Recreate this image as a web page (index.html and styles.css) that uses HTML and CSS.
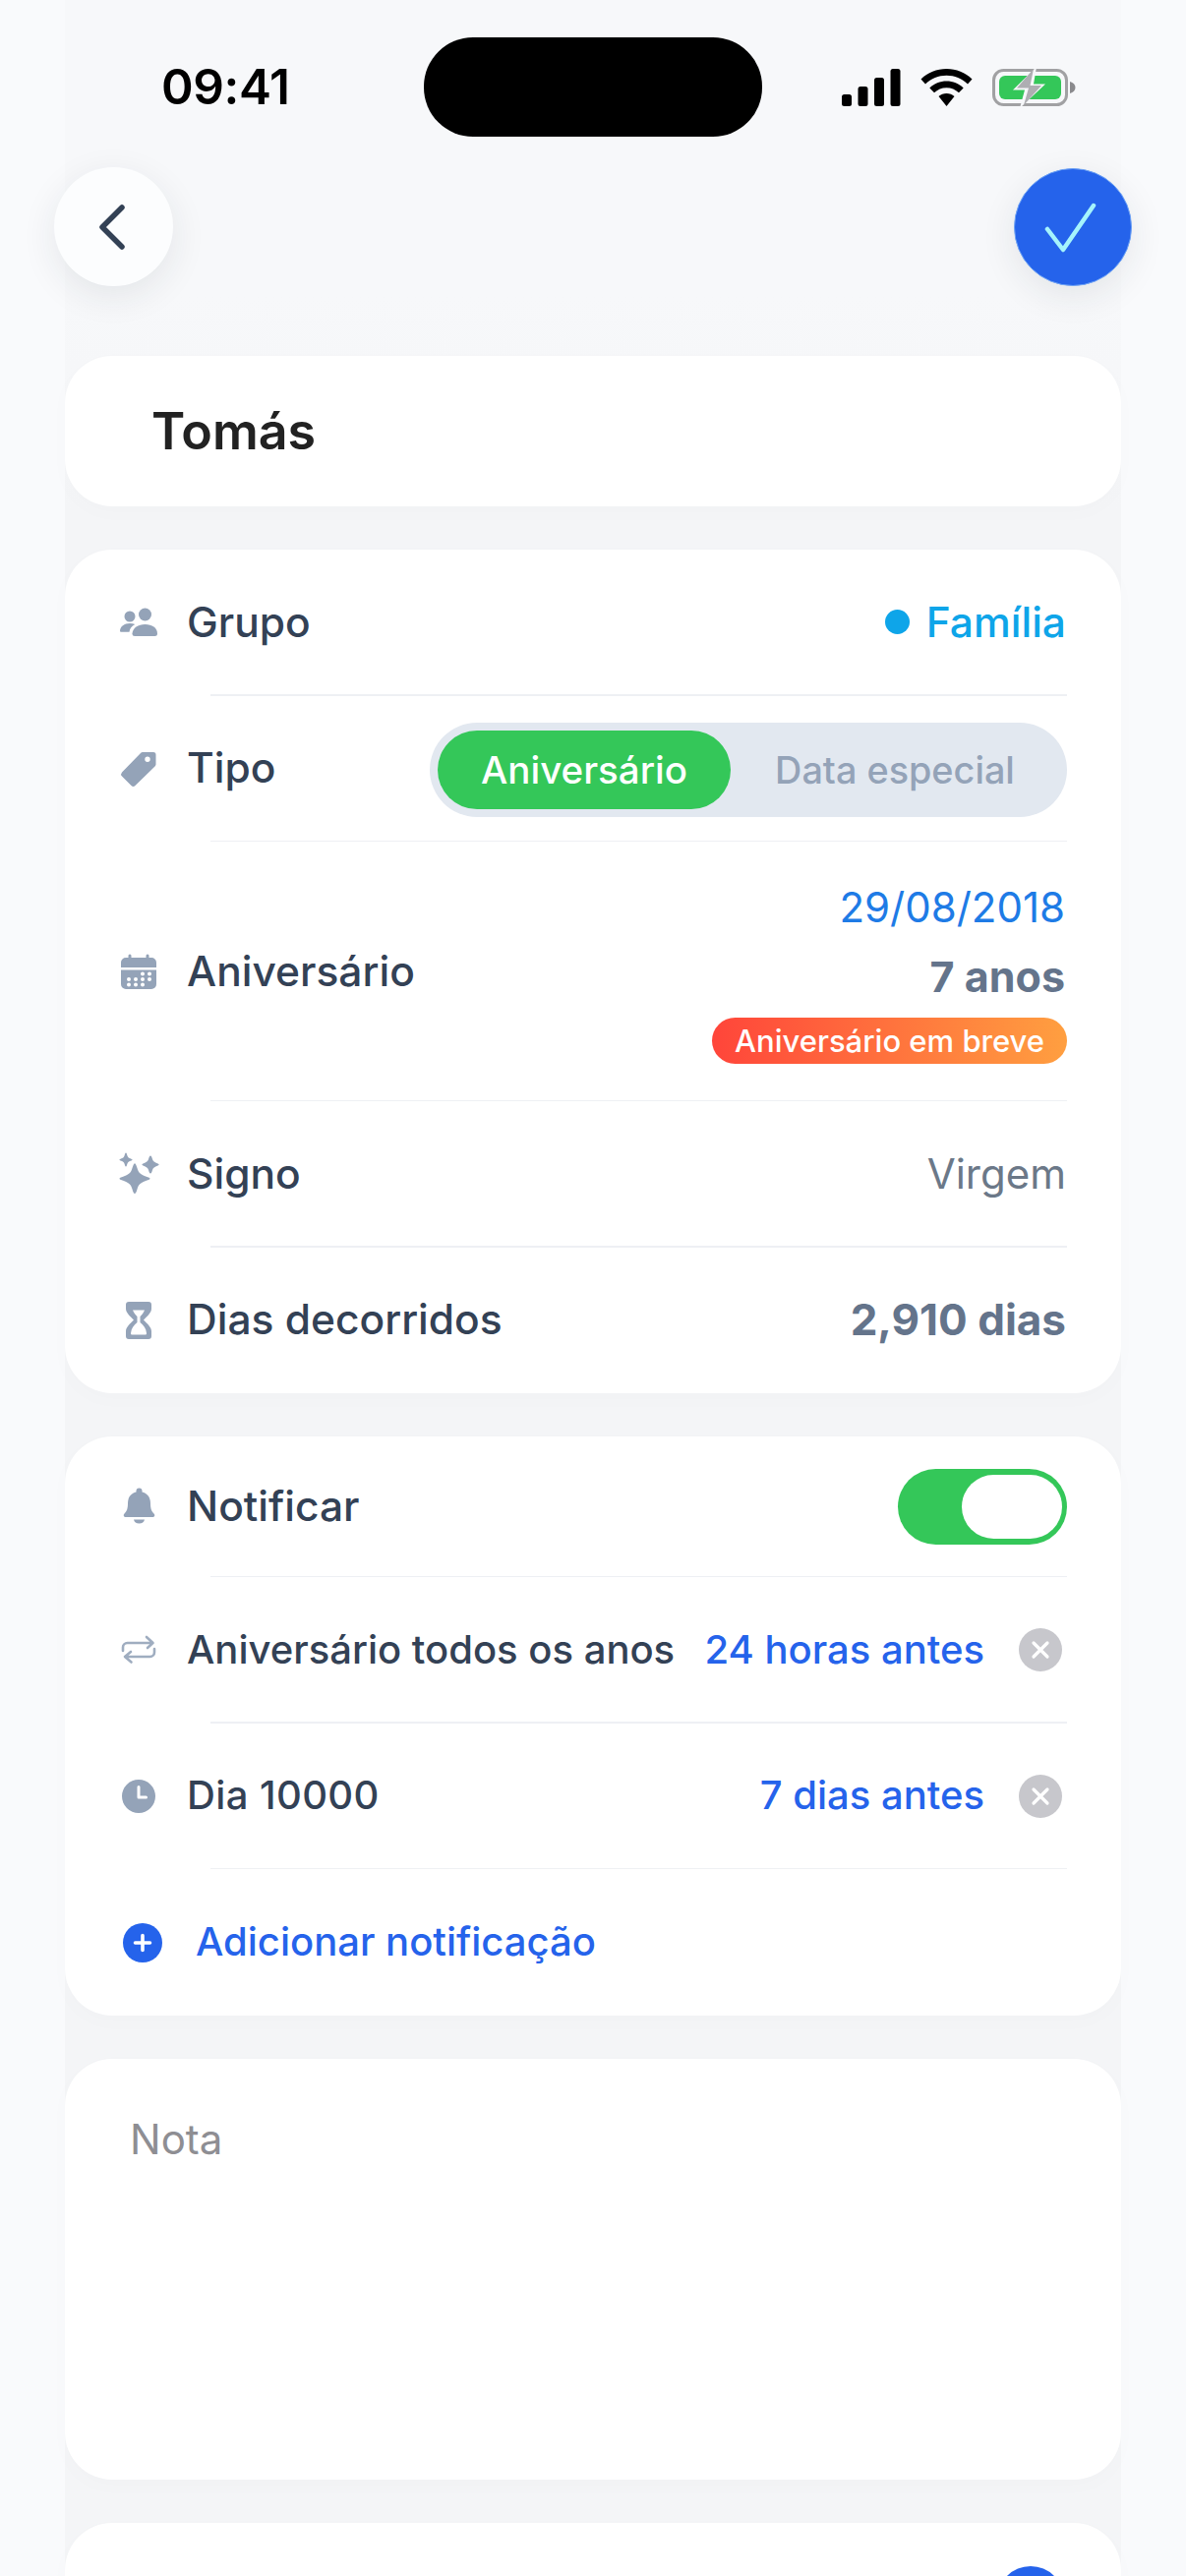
FILE: index.html
```html
<!DOCTYPE html>
<html lang="pt">
<head>
<meta charset="utf-8">
<title>Tomás</title>
<link rel="stylesheet" href="styles.css">
</head>
<body>
<div class="screen">
  <div class="column">
    <header class="top">
      <div class="status">
        <span class="time">09:41</span>
        <div class="island"></div>
        <div class="status-icons">
          <svg class="ic-signal" viewBox="0 0 60 38" width="60" height="38"><rect x="0" y="26" width="10" height="12" rx="2.5"/><rect x="16.5" y="18" width="10" height="20" rx="2.5"/><rect x="33" y="9" width="10" height="29" rx="2.5"/><rect x="49.5" y="0" width="10" height="38" rx="2.5"/></svg>
          <svg class="ic-wifi" viewBox="0 0 53 38" width="53" height="38"><path d="M26.5 0C16.5 0 7.5 3.8 0.5 10.5L5 15.5C10.8 10 18.3 6.8 26.5 6.8S42.2 10 48 15.5L52.5 10.5C45.5 3.8 36.5 0 26.5 0Z"/><path d="M26.5 12.5C20 12.5 14 15 9.3 19.4L14 24.3C17.4 21.2 21.7 19.3 26.5 19.3S35.6 21.2 39 24.3L43.7 19.4C39 15 33 12.5 26.5 12.5Z"/><path d="M26.5 25C23.5 25 20.7 26.1 18.5 28.1L26.5 38L34.5 28.1C32.3 26.1 29.5 25 26.5 25Z"/></svg>
          <svg class="ic-battery" viewBox="0 0 86 38" width="86" height="38"><rect x="1.5" y="1.5" width="74" height="35" rx="10" fill="none" stroke="#a1a1a3" stroke-width="3"/><path d="M79 13c3.500 1 5.500 3 5.500 6s-2 5-5.500 6z" fill="#8a8a8d"/><rect x="7" y="7" width="63" height="24" rx="6" fill="#34c759"/><path d="M45 -2L21 21.500H33L28 40L54 15.500H42Z" fill="#f7f8fa"/><path d="M42 0L25 19.500H37L32 37L50 17H38.500Z" fill="#aeaeb2"/></svg>
        </div>
      </div>
      <nav class="nav">
        <button class="round back" type="button" aria-label="Voltar">
          <svg viewBox="0 0 28 48" width="28" height="48"><path d="M24 4L4 24L24 44" fill="none" stroke="#334155" stroke-width="5.500" stroke-linecap="round" stroke-linejoin="round"/></svg>
        </button>
        <button class="round save" type="button" aria-label="Guardar">
          <svg viewBox="0 0 56 54" width="56" height="54"><path d="M4 29L20 50L51 5" fill="none" stroke="#a5f3fc" stroke-width="4.500" stroke-linecap="round" stroke-linejoin="round"/></svg>
        </button>
      </nav>
    </header>

    <main class="cards">
      <section class="card name-card"><h1 class="name">Tomás</h1></section>

      <section class="card">
        <div class="row">
          <svg class="icon" viewBox="0 0 40 40"><circle cx="11" cy="14" r="5.500"/><circle cx="26.500" cy="12" r="6.500"/><path d="M1 29c0-5 4.500-8 10-8 2 0 3.800.4 5.300 1.100C12.800 24 11 26.500 10.500 29.700H2.500C1.600 29.700 1 29.500 1 29Z"/><path d="M13.500 31.500C14 25.500 19.500 22 26.500 22S39 25.500 39 31.500C39 33.200 38 34 36.500 34H16C14.500 34 13.500 33.200 13.500 31.500Z"/></svg>
          <span class="label">Grupo</span>
          <span class="value family"><i class="dot"></i>Família</span>
        </div>
        <div class="row">
          <svg class="icon" viewBox="0 0 40 40"><path fill-rule="evenodd" d="M24 3H35A2.500 2.500 0 0 1 37.500 5.500V15.500A3 3 0 0 1 36.500 17.500L16.500 37A3 3 0 0 1 12.500 37L3 27.500A3 3 0 0 1 3 23.500L22 4A3 3 0 0 1 24 3ZM29 7.500A2.700 2.700 0 1 0 29 12.900A2.700 2.700 0 1 0 29 7.500Z"/></svg>
          <span class="label">Tipo</span>
          <div class="segment">
            <span class="seg-on">Aniversário</span>
            <span class="seg-off">Data especial</span>
          </div>
        </div>
        <div class="row row-tall">
          <svg class="icon" viewBox="0 0 40 40"><path d="M11 2.500a1.500 1.500 0 0 1 1.500 1.500v2h15V4a1.500 1.500 0 0 1 3 0v2H33a5 5 0 0 1 5 5v5H2v-5a5 5 0 0 1 5-5h2.500V4A1.500 1.500 0 0 1 11 2.500Z"/><path fill-rule="evenodd" d="M2 18.500h36V33a5 5 0 0 1-5 5H7a5 5 0 0 1-5-5ZM24 20.500a2 2 0 1 0 0 4a2 2 0 1 0 0-4ZM31 20.500a2 2 0 1 0 0 4a2 2 0 1 0 0-4ZM10 26a2 2 0 1 0 0 4a2 2 0 1 0 0-4ZM17 26a2 2 0 1 0 0 4a2 2 0 1 0 0-4ZM24 26a2 2 0 1 0 0 4a2 2 0 1 0 0-4ZM31 26a2 2 0 1 0 0 4a2 2 0 1 0 0-4ZM10 31.500a2 2 0 1 0 0 4a2 2 0 1 0 0-4ZM17 31.500a2 2 0 1 0 0 4a2 2 0 1 0 0-4ZM24 31.500a2 2 0 1 0 0 4a2 2 0 1 0 0-4Z"/></svg>
          <span class="label">Aniversário</span>
          <div class="date-stack">
            <span class="date">29/08/2018</span>
            <span class="years">7 anos</span>
            <span class="badge">Aniversário em breve</span>
          </div>
        </div>
        <div class="row">
          <svg class="icon" viewBox="0 0 40 40"><path d="M16 9C16.800 10 17.500 10.500 18.500 14C20 19 21.500 20.500 30 23.500C32 24.200 32 25.300 30 26C21.500 29 20 30.500 18.500 35.500C17.500 39 16.800 40 16 40S14.500 39 13.500 35.500C12 30.500 10.500 29 2 26C0 25.300 0 24.200 2 23.500C10.500 20.500 12 19 13.500 14C14.500 10.500 15.200 10 16 9Z"/><path d="M7 -1.500C7.800 -1.500 8 0 8.500 1.500C9 3 10 4 12.500 4.700C14 5.100 14 6 12.500 6.400C10 7.100 9 8 8.500 9.500C8 11 7.800 12.500 7 12.500S6 11 5.500 9.500C5 8 4 7.100 1.500 6.400C0 6 0 5.100 1.500 4.700C4 4 5 3 5.500 1.500C6 0 6.200 -1.500 7 -1.500Z"/><path d="M32 1.500C33 1.500 33.300 3 34 5C34.700 7 36 8.300 39.500 9.500C41 10 41 11 39.500 11.500C36 12.700 34.700 14 34 16C33.300 18 33 19.500 32 19.500S30.700 18 30 16C29.300 14 28 12.700 24.500 11.500C23 11 23 10 24.500 9.500C28 8.300 29.300 7 30 5C30.700 3 31 1.500 32 1.500Z"/></svg>
          <span class="label">Signo</span>
          <span class="value muted">Virgem</span>
        </div>
        <div class="row">
          <svg class="icon" viewBox="0 0 40 40"><path fill-rule="evenodd" d="M10 1H30A3 3 0 0 1 33 4V8C33 12 29 15.500 25 19.500C29 23.500 33 27 33 31V36A3 3 0 0 1 30 39H10A3 3 0 0 1 7 36V31C7 27 11 23.500 15 19.500C11 15.500 7 12 7 8V4A3 3 0 0 1 10 1ZM14 9.500C15 12 16.500 14 18.500 16V22C15 25 12.500 28 12 33C12 34 12.500 34.500 13.500 34.500H26.500C27.500 34.500 28 34 28 33C27.500 28 25 25 21.500 22V16C23.500 14 25 12 26 9.500Z"/></svg>
          <span class="label">Dias decorridos</span>
          <span class="value strong">2,910 dias</span>
        </div>
      </section>

      <section class="card">
        <div class="row row-first">
          <svg class="icon" viewBox="0 0 40 40"><path d="M20.500.5A3 3 0 0 1 23.500 3.500V4.500C29.500 6 32 10.500 32 16C32 21.500 33 24 35.500 26.500C37 28 36.200 30 34 30H7C4.800 30 4 28 5.500 26.500C8 24 9 21.500 9 16C9 10.500 11.500 6 17.500 4.500V3.500A3 3 0 0 1 20.500.5Z"/><path d="M15 32.500H26C25.500 35 23.500 36.500 20.500 36.500S15.500 35 15 32.500Z"/></svg>
          <span class="label">Notificar</span>
          <div class="toggle"><span class="knob"></span></div>
        </div>
        <div class="row">
          <svg class="icon icon-line" viewBox="0 0 40 40"><path d="M4 21V17.500A4.500 4.500 0 0 1 8.500 13H34.500M28 7L34.500 13L29 18" /><path d="M36 19V22.500A4.500 4.500 0 0 1 31.500 27H6.500M12 22L6 27L12.500 32.500"/></svg>
          <span class="label small grow">Aniversário todos os anos</span>
          <span class="link">24 horas antes</span>
          <span class="clear"><svg viewBox="0 0 44 44" width="44" height="44"><path d="M15 15L29 29M29 15L15 29" stroke="#fff" stroke-width="3.200" stroke-linecap="round"/></svg></span>
        </div>
        <div class="row">
          <svg class="icon" viewBox="0 0 40 40"><circle cx="20" cy="20" r="17"/><path d="M20 10.500V21H27.500" fill="none" stroke="#fff" stroke-width="3" stroke-linecap="round" stroke-linejoin="round"/></svg>
          <span class="label small spaced grow">Dia 10000</span>
          <span class="link">7 dias antes</span>
          <span class="clear"><svg viewBox="0 0 44 44" width="44" height="44"><path d="M15 15L29 29M29 15L15 29" stroke="#fff" stroke-width="3.200" stroke-linecap="round"/></svg></span>
        </div>
        <div class="row row-add">
          <span class="plus"><svg viewBox="0 0 40 40" width="40" height="40"><path d="M20 12.500V27.500M12.500 20H27.500" stroke="#fff" stroke-width="3.600" stroke-linecap="round"/></svg></span>
          <span class="link add">Adicionar notificação</span>
        </div>
      </section>

      <section class="card note-card"><span class="note">Nota</span></section>

      <section class="card last-card"><span class="last-dot"></span></section>
    </main>
  </div>
</div>
</body>
</html>
```

FILE: styles.css
```css
* { box-sizing: border-box; }
html, body { margin: 0; padding: 0; height: 2620px; overflow: hidden; }
body {
  width: 1206px;
  background: #f9fafc;
  font-family: Inter, "Noto Sans", sans-serif;
  color: #334155;
}
.screen { height: 2620px; padding: 0 66px; overflow: hidden; }
.column {
  min-height: 2620px;
  background: linear-gradient(180deg, #f7f8fa 0, #f7f8fa 300px, #f4f5f7 520px, #f4f5f7 100%);
}

/* status bar */
.status {
  display: grid;
  grid-template-columns: 1fr 344px 1fr;
  align-items: center;
  height: 101px;
  position: relative;
  top: 38px;
}
.time {
  padding-left: 98px;
  font-size: 49.500px;
  font-weight: 600;
  color: #000;
  line-height: 1;
  letter-spacing: -0.4px;
}
.island { height: 101px; border-radius: 50px; background: #000; }
.status-icons { display: flex; align-items: center; padding-left: 81px; }
.ic-signal, .ic-wifi { fill: #000; display: block; }
.ic-wifi { margin-left: 20px; }
.ic-battery { margin-left: 20px; display: block; }

/* floating nav */
.top { height: 362px; }
.nav {
  display: flex;
  justify-content: space-between;
  align-items: center;
  margin: 69px -11px 0;
}
.round {
  width: 121px;
  height: 121px;
  border-radius: 50%;
  border: 0;
  padding: 0;
  display: flex;
  align-items: center;
  justify-content: center;
  box-shadow: 0 10px 36px rgba(30, 41, 59, 0.09);
}
.back { background: #fcfdfe; padding-right: 4px; }
.save {
  width: 120px;
  height: 120px;
  background: #2563eb;
  border: 1.5px solid #6ea3f5;
  padding-right: 4px;
}

/* cards */
.cards { display: flex; flex-direction: column; gap: 44px; }
.card {
  background: #fff;
  border-radius: 48px;
  box-shadow: 0 6px 24px rgba(30, 41, 59, 0.015);
  padding: 0 55px 0 56px;
}
.name-card { height: 153px; padding-left: 88px; display: flex; align-items: center; }
.name { margin: 0; font-size: 52px; font-weight: 600; color: #222; line-height: 1; }

.row {
  display: flex;
  align-items: center;
  height: 148.500px;
  position: relative;
}
.row-first { height: 143px; }
.row-tall { height: 264px; }
.row::after {
  content: "";
  position: absolute;
  left: 92px;
  right: 0;
  bottom: 0;
  height: 1.5px;
  background: #eef0f4;
}
.row:last-child::after { display: none; }
.icon {
  width: 40px;
  height: 40px;
  flex: none;
  overflow: visible;
  fill: #94a3b8;
  margin-left: -1px;
}
.icon-line {
  fill: none;
  stroke: #9fadc0;
  stroke-width: 2.600;
  stroke-linecap: round;
  stroke-linejoin: round;
}
.label {
  margin-left: 29px;
  margin-bottom: 2px;
  font-size: 42.500px;
  font-weight: 450;
  color: #334155;
  white-space: nowrap;
}
.small { font-size: 40px; }
.spaced { letter-spacing: 0.4px; }
.grow { flex: 1; }
.value { margin-left: auto; margin-right: 1px; margin-bottom: 2px; font-size: 42px; white-space: nowrap; }
.family { color: #0ea5e9; font-weight: 500; display: flex; align-items: center; font-size: 42.500px; }
.dot { width: 25px; height: 25px; border-radius: 50%; background: #0ea5e9; margin-right: 17px; }
.muted { color: #6b7888; font-weight: 400; }
.strong { color: #64748b; font-weight: 700; font-size: 44px; }

.segment {
  margin-left: auto;
  margin-top: 2px;
  width: 648px;
  height: 96px;
  padding: 8px;
  border-radius: 48px;
  background: #e2e8f0;
  display: flex;
  align-items: center;
}
.seg-on {
  width: 298px;
  height: 80px;
  border-radius: 40px;
  background: #34c759;
  color: #fff;
  font-size: 38.500px;
  font-weight: 500;
  display: flex;
  align-items: center;
  justify-content: center;
}
.seg-off {
  flex: 1;
  text-align: center;
  font-size: 37.800px;
  font-weight: 500;
  color: #94a3b8;
}

.date-stack {
  margin-left: auto;
  margin-right: 2px;
  margin-bottom: 7px;
  display: flex;
  flex-direction: column;
  align-items: flex-end;
}
.date { font-size: 42px; color: #1e7be6; line-height: 70px; }
.years { font-size: 43px; font-weight: 700; color: #64748b; line-height: 70px; }
.badge {
  margin-top: 7px;
  margin-right: -2px;
  height: 47px;
  padding: 0 23px;
  border-radius: 24px;
  background: linear-gradient(90deg, #ff453a, #ff9f40);
  color: #fff;
  font-size: 31px;
  font-weight: 500;
  display: flex;
  align-items: center;
}

.toggle {
  margin-left: auto;
  width: 172px;
  height: 77px;
  border-radius: 39px;
  background: #34c759;
  padding: 6px 5px;
  display: flex;
  justify-content: flex-end;
}
.knob { width: 102px; height: 65px; border-radius: 33px; background: #fff; }
.link { font-size: 40px; font-weight: 500; color: #2563eb; white-space: nowrap; margin-bottom: 2px; }
.clear {
  width: 44px;
  height: 44px;
  border-radius: 50%;
  background: #c7c7cc;
  margin-left: 35px;
  margin-right: 5px;
  flex: none;
  display: flex;
}
.row-add { height: 149px; }
.plus {
  width: 40px;
  height: 40px;
  border-radius: 50%;
  background: #2563eb;
  margin-left: 3px;
  flex: none;
  display: flex;
}
.add { margin-left: 34px; }

.note-card { height: 428px; padding: 57px 66px; }
.note { display: block; font-size: 42px; color: #8e8e93; line-height: 50px; }
.last-card { height: 200px; padding-top: 44px; display: flex; justify-content: flex-end; }
.last-dot { width: 68px; height: 68px; border-radius: 50%; background: #2563eb; margin-right: 3px; }
```
